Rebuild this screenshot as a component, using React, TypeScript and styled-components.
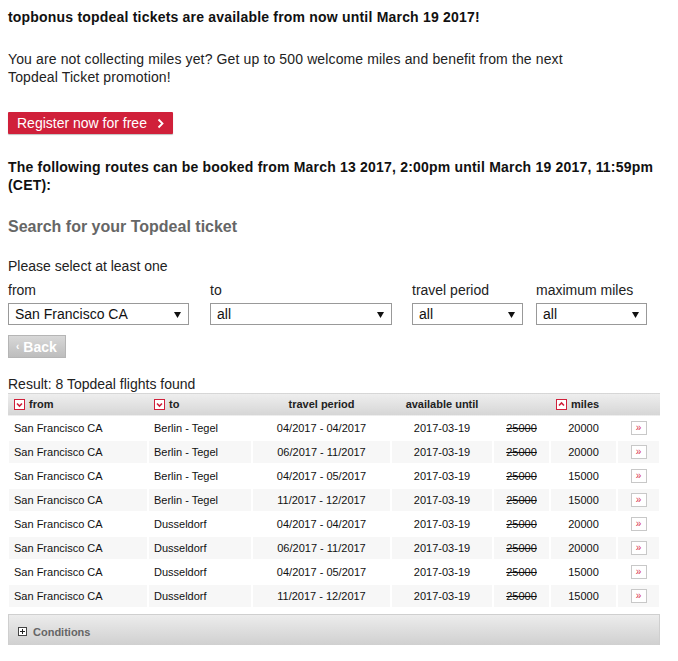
import React from "react";
import styled, { createGlobalStyle } from "styled-components";

const Global = createGlobalStyle`
  html, body { margin: 0; padding: 0; background: #fff; }
  body { padding: 8px; font-family: "Liberation Sans", Arial, sans-serif; color: #222; }
  * { box-sizing: border-box; }
`;

const red = "#d0203a";

const Page = styled.div`
  width: 652px;
  display: flex;
  flex-direction: column;
`;

const Headline = styled.div`
  font-size: 14px;
  font-weight: bold;
  line-height: 18px;
  letter-spacing: 0.2px;
  color: #111;
`;

const Para = styled.p`
  margin: 24px 0 0;
  font-size: 14px;
  line-height: 18px;
  letter-spacing: 0.13px;
`;

const RegisterButton = styled.a`
  margin-top: 26px;
  align-self: flex-start;
  display: flex;
  align-items: center;
  gap: 10px;
  height: 22px;
  padding: 0 9px 0 9px;
  width: 165px;
  background: ${red};
  color: #fff;
  font-size: 14px;
  border-radius: 1px;
  box-shadow: 0 1px 1px rgba(0, 0, 0, 0.25);
  text-decoration: none;
`;

const Routes = styled(Headline)`
  margin-top: 24px;
`;

const SearchTitle = styled.h2`
  margin: 23px 0 0;
  font-size: 16px;
  line-height: 20px;
  font-weight: bold;
  color: #666;
`;

const Hint = styled.div`
  margin-top: 20px;
  font-size: 14px;
  line-height: 18px;
`;

const Filters = styled.div`
  margin-top: 6px;
  display: flex;
`;

const Field = styled.div<{ $w: number; $gap: number }>`
  width: ${(p) => p.$w}px;
  margin-right: ${(p) => p.$gap}px;
  display: flex;
  flex-direction: column;
  gap: 4px;
`;

const Label = styled.div`
  font-size: 14px;
  line-height: 18px;
`;

const SelectBox = styled.div`
  height: 22px;
  border: 1px solid #999;
  background: #fff;
  display: flex;
  align-items: center;
  justify-content: space-between;
  padding: 0 7px 0 6px;
  font-size: 14px;
  color: #111;
`;

const BackButton = styled.div`
  margin-top: 10px;
  align-self: flex-start;
  width: 58px;
  height: 23px;
  display: flex;
  align-items: center;
  gap: 4px;
  padding-left: 7px;
  border: 1px solid #b5b5b5;
  background: linear-gradient(#d8d8d8, #bdbdbd);
  color: #fff;
  font-size: 14px;
  font-weight: bold;
`;

const BackArrow = styled.span`
  font-size: 10px;
`;

const Result = styled.div`
  margin-top: 17px;
  font-size: 14px;
  line-height: 18px;
`;

const Table = styled.table`
  width: 652px;
  table-layout: fixed;
  border-collapse: separate;
  border-spacing: 0;
  font-size: 11px;
`;

const Th = styled.th<{ $align?: string }>`
  text-align: ${(p) => p.$align || "left"};
  font-weight: bold;
  color: #222;
  padding: 0 5px;
  height: 23px;
  line-height: 13px;
  vertical-align: middle;
  border: 1px solid transparent;
  background: linear-gradient(#eeeeee, #d6d6d6);
  white-space: nowrap;
`;

const HeadInner = styled.span`
  display: inline-flex;
  align-items: center;
  vertical-align: middle;
  gap: 4px;
`;

const Td = styled.td<{ $align?: string; $shade: boolean }>`
  text-align: ${(p) => p.$align || "left"};
  height: 24px;
  line-height: 13px;
  vertical-align: middle;
  padding: 0 5px;
  border: 1px solid #fff;
  background: ${(p) => (p.$shade ? "#f7f7f7" : "#fff")};
  color: #111;
  white-space: nowrap;
`;

const Strike = styled.span`
  text-decoration: line-through;
`;

const GoButton = styled.span`
  display: inline-flex;
  align-items: center;
  justify-content: center;
  width: 16px;
  height: 14px;
  border: 1px solid #c8c8c8;
  background: #fff;
  color: #d8324a;
  font-size: 10px;
  font-weight: normal;
  line-height: 1;
  vertical-align: middle;
`;

const Conditions = styled.div`
  margin-top: 6px;
  height: 31px;
  display: flex;
  align-items: center;
  gap: 6px;
  padding: 3px 0 0 9px;
  border: 1px solid #cfcfcf;
  border-bottom: none;
  background: linear-gradient(#ececec, #d0d0d0);
  font-size: 11px;
  font-weight: bold;
  color: #666;
`;

const SortIcon = ({ up }: { up?: boolean }) => (
  <svg width="11" height="11" viewBox="0 0 11 11" style={{ display: "block" }}>
    <rect x="0.5" y="0.5" width="10" height="10" fill="#fff" stroke={red} />
    <path
      d={up ? "M3 6.5 L5.5 4 L8 6.5" : "M3 4.5 L5.5 7 L8 4.5"}
      fill="none"
      stroke={red}
      strokeWidth="1.6"
    />
  </svg>
);

const Arrow = () => (
  <svg width="7" height="7" viewBox="0 0 7 7">
    <path d="M0 1 L7 1 L3.5 7 Z" fill="#111" />
  </svg>
);

const Chevron = () => (
  <svg width="7" height="11" viewBox="0 0 7 11">
    <path d="M1.5 1.5 L5.5 5.5 L1.5 9.5" fill="none" stroke="#fff" strokeWidth="1.8" />
  </svg>
);

const PlusBox = () => (
  <svg width="9" height="9" viewBox="0 0 9 9">
    <rect x="0.5" y="0.5" width="8" height="8" fill="#fff" stroke="#444" />
    <path d="M2 4.5 H7 M4.5 2 V7" stroke="#222" strokeWidth="1" />
  </svg>
);

const rows = [
  ["Berlin - Tegel", "04/2017 - 04/2017", "20000"],
  ["Berlin - Tegel", "06/2017 - 11/2017", "20000"],
  ["Berlin - Tegel", "04/2017 - 05/2017", "15000"],
  ["Berlin - Tegel", "11/2017 - 12/2017", "15000"],
  ["Dusseldorf", "04/2017 - 04/2017", "20000"],
  ["Dusseldorf", "06/2017 - 11/2017", "20000"],
  ["Dusseldorf", "04/2017 - 05/2017", "15000"],
  ["Dusseldorf", "11/2017 - 12/2017", "15000"],
];

const filters = [
  { label: "from", value: "San Francisco CA", w: 181, gap: 21 },
  { label: "to", value: "all", w: 182, gap: 20 },
  { label: "travel period", value: "all", w: 111, gap: 13 },
  { label: "maximum miles", value: "all", w: 111, gap: 0 },
];

const colWidths = [140, 104, 139, 102, 57, 67, 43];

export default function App() {
  return (
    <Page>
      <Global />
      <Headline>topbonus topdeal tickets are available from now until March 19 2017!</Headline>
      <Para>
        You are not collecting miles yet? Get up to 500 welcome miles and benefit from the next
        <br />
        Topdeal Ticket promotion!
      </Para>
      <RegisterButton>
        Register now for free <Chevron />
      </RegisterButton>
      <Routes>
        The following routes can be booked from March 13 2017, 2:00pm until March 19 2017, 11:59pm (CET):
      </Routes>
      <SearchTitle>Search for your Topdeal ticket</SearchTitle>
      <Hint>Please select at least one</Hint>
      <Filters>
        {filters.map((f) => (
          <Field key={f.label} $w={f.w} $gap={f.gap}>
            <Label>{f.label}</Label>
            <SelectBox>
              <span>{f.value}</span>
              <Arrow />
            </SelectBox>
          </Field>
        ))}
      </Filters>
      <BackButton>
        <BackArrow>‹</BackArrow>Back
      </BackButton>
      <Result>Result: 8 Topdeal flights found</Result>
      <Table>
        <colgroup>
          {colWidths.map((w, i) => (
            <col key={i} style={{ width: w }} />
          ))}
        </colgroup>
        <thead>
          <tr>
            <Th>
              <HeadInner>
                <SortIcon /> from
              </HeadInner>
            </Th>
            <Th>
              <HeadInner>
                <SortIcon /> to
              </HeadInner>
            </Th>
            <Th $align="center">travel period</Th>
            <Th $align="center">available until</Th>
            <Th />
            <Th>
              <HeadInner>
                <SortIcon up /> miles
              </HeadInner>
            </Th>
            <Th />
          </tr>
        </thead>
        <tbody>
          {rows.map((r, i) => {
            const shade = i % 2 === 1;
            return (
              <tr key={i}>
                <Td $shade={shade}>San Francisco CA</Td>
                <Td $shade={shade}>{r[0]}</Td>
                <Td $shade={shade} $align="center">{r[1]}</Td>
                <Td $shade={shade} $align="center">2017-03-19</Td>
                <Td $shade={shade} $align="center">
                  <Strike>25000</Strike>
                </Td>
                <Td $shade={shade} $align="center">{r[2]}</Td>
                <Td $shade={shade} $align="center">
                  <GoButton>»</GoButton>
                </Td>
              </tr>
            );
          })}
        </tbody>
      </Table>
      <Conditions>
        <PlusBox />
        Conditions
      </Conditions>
    </Page>
  );
}
